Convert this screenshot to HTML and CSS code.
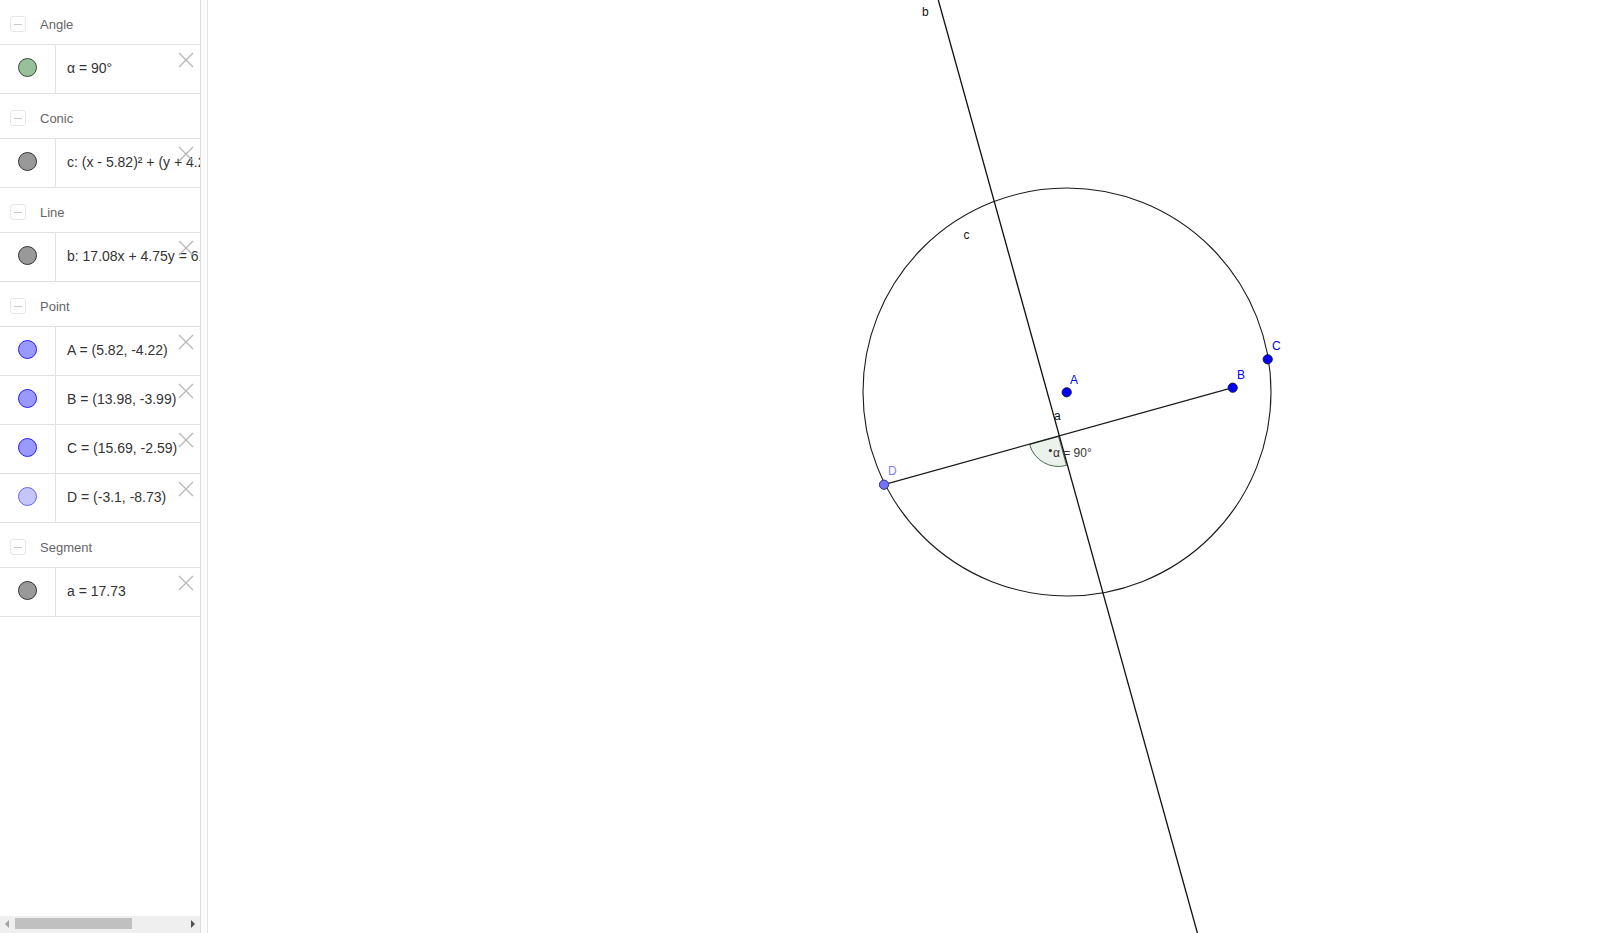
FILE: index.html
```html
<!DOCTYPE html>
<html>
<head>
<meta charset="utf-8">
<title>GeoGebra</title>
<link rel="stylesheet" href="styles.css">
</head>
<body>
<div class="app">
  <aside class="algebra">
    <div class="list">
      <div class="group-head"><span class="toggle"></span><span class="group-name">Angle</span></div>
      <div class="item">
        <div class="marker-cell"><span class="marker m-angle"></span></div>
        <div class="item-text">α = 90°</div>
        <span class="close"><svg viewBox="0 0 16 16"><path d="M1 1 L15 15 M15 1 L1 15"/></svg></span>
      </div>

      <div class="group-head"><span class="toggle"></span><span class="group-name">Conic</span></div>
      <div class="item">
        <div class="marker-cell"><span class="marker m-gray"></span></div>
        <div class="item-text">c: (x - 5.82)² + (y + 4.22)² = 100</div>
        <span class="close"><svg viewBox="0 0 16 16"><path d="M1 1 L15 15 M15 1 L1 15"/></svg></span>
      </div>

      <div class="group-head"><span class="toggle"></span><span class="group-name">Line</span></div>
      <div class="item">
        <div class="marker-cell"><span class="marker m-gray"></span></div>
        <div class="item-text">b: 17.08x + 4.75y = 61.59</div>
        <span class="close"><svg viewBox="0 0 16 16"><path d="M1 1 L15 15 M15 1 L1 15"/></svg></span>
      </div>

      <div class="group-head"><span class="toggle"></span><span class="group-name">Point</span></div>
      <div class="item">
        <div class="marker-cell"><span class="marker m-blue"></span></div>
        <div class="item-text">A = (5.82, -4.22)</div>
        <span class="close"><svg viewBox="0 0 16 16"><path d="M1 1 L15 15 M15 1 L1 15"/></svg></span>
      </div>
      <div class="item">
        <div class="marker-cell"><span class="marker m-blue"></span></div>
        <div class="item-text">B = (13.98, -3.99)</div>
        <span class="close"><svg viewBox="0 0 16 16"><path d="M1 1 L15 15 M15 1 L1 15"/></svg></span>
      </div>
      <div class="item">
        <div class="marker-cell"><span class="marker m-blue"></span></div>
        <div class="item-text">C = (15.69, -2.59)</div>
        <span class="close"><svg viewBox="0 0 16 16"><path d="M1 1 L15 15 M15 1 L1 15"/></svg></span>
      </div>
      <div class="item">
        <div class="marker-cell"><span class="marker m-light"></span></div>
        <div class="item-text">D = (-3.1, -8.73)</div>
        <span class="close"><svg viewBox="0 0 16 16"><path d="M1 1 L15 15 M15 1 L1 15"/></svg></span>
      </div>

      <div class="group-head"><span class="toggle"></span><span class="group-name">Segment</span></div>
      <div class="item">
        <div class="marker-cell"><span class="marker m-gray"></span></div>
        <div class="item-text">a = 17.73</div>
        <span class="close"><svg viewBox="0 0 16 16"><path d="M1 1 L15 15 M15 1 L1 15"/></svg></span>
      </div>
    </div>
    <div class="hscroll">
      <span class="arrow arrow-left"></span>
      <span class="thumb"></span>
      <span class="track-rest"></span>
      <span class="arrow arrow-right"></span>
    </div>
  </aside>
  <div class="divider"></div>
  <main class="canvas">
    <svg class="graphics" width="1392" height="933" viewBox="208 0 1392 933">
      <circle class="conic" cx="1067" cy="392" r="204"/>
      <path class="angle-fill" d="M1058.5 436.5 L1029.6 444.5 A30 30 0 0 0 1066.5 465.4 Z"/>
      <line class="line" x1="938.3" y1="0" x2="1197.4" y2="933"/>
      <line class="segment" x1="884" y1="484.7" x2="1232.7" y2="387.7"/>
      <circle class="angle-dot" cx="1050.4" cy="450.6" r="1.6"/>
      <text class="lbl lbl-angle" x="1053" y="457">α = 90°</text>
      <text class="lbl" x="922" y="16">b</text>
      <text class="lbl" x="963.5" y="239">c</text>
      <text class="lbl" x="1054" y="420">a</text>
      <circle class="pt" cx="1066.7" cy="392.3" r="4.6"/>
      <circle class="pt" cx="1232.7" cy="387.7" r="4.6"/>
      <circle class="pt" cx="1267.7" cy="359.3" r="4.6"/>
      <circle class="pt pt-light" cx="884" cy="484.7" r="4.6"/>
      <text class="lbl lbl-pt" x="1070" y="384">A</text>
      <text class="lbl lbl-pt" x="1237" y="378.5">B</text>
      <text class="lbl lbl-pt" x="1272" y="349.5">C</text>
      <text class="lbl lbl-ptl" x="888" y="475">D</text>
    </svg>
  </main>
</div>
</body>
</html>
```

FILE: styles.css
```css
html, body {
  margin: 0;
  padding: 0;
  background: #ffffff;
  overflow: hidden;
}

.app {
  display: flex;
  width: 1600px;
  height: 933px;
  font-family: "Liberation Sans", Arial, sans-serif;
}

.algebra {
  width: 200px;
  flex: 0 0 200px;
  display: flex;
  flex-direction: column;
  overflow: hidden;
  background: #ffffff;
}

.list {
  flex: 1;
  overflow: hidden;
}

.group-head {
  height: 40px;
  padding-top: 4px;
  border-bottom: 1px solid #e2e2e2;
  display: flex;
  align-items: center;
  padding-left: 10px;
}

.toggle {
  width: 14px;
  height: 14px;
  border: 1px solid #e6e6e6;
  border-radius: 3px;
  margin-right: 14px;
  display: flex;
  align-items: center;
  justify-content: center;
  box-sizing: content-box;
}

.toggle::before {
  content: "";
  width: 8px;
  height: 1px;
  background: #c8c8c8;
}

.group-name {
  font-size: 13px;
  color: #666666;
}

.item {
  position: relative;
  height: 48px;
  border-bottom: 1px solid #e2e2e2;
  display: flex;
}

.marker-cell {
  width: 56px;
  flex: 0 0 56px;
  border-right: 1px solid #e2e2e2;
  display: flex;
  align-items: center;
  justify-content: center;
  padding-bottom: 3px;
  box-sizing: border-box;
}

.marker {
  width: 17px;
  height: 17px;
  border-radius: 50%;
  border: 1px solid #333333;
}

.m-angle { background: #99c199; border-color: #3a4a3a; }
.m-gray { background: #999999; border-color: #333333; }
.m-blue { background: #9999ff; border-color: #2222ee; }
.m-light { background: #c6c6ff; border-color: #6666ee; }

.item-text {
  padding-left: 11px;
  display: flex;
  align-items: center;
  padding-bottom: 3px;
  font-size: 14px;
  color: #333333;
  white-space: nowrap;
}

.close {
  position: absolute;
  left: 178px;
  top: 7px;
  width: 16px;
  height: 16px;
}

.close svg {
  width: 16px;
  height: 16px;
  display: block;
}

.close path {
  stroke: #b8b8b8;
  stroke-width: 1.4;
  fill: none;
}

.hscroll {
  height: 17px;
  flex: 0 0 17px;
  background: #efefef;
  display: flex;
  align-items: flex-start;
}

.arrow {
  width: 15px;
  flex: 0 0 15px;
  height: 17px;
  position: relative;
}

.arrow::before {
  content: "";
  position: absolute;
  top: 4px;
  width: 0;
  height: 0;
  border-top: 4px solid transparent;
  border-bottom: 4px solid transparent;
}

.arrow-left::before {
  left: 5px;
  border-right: 4px solid #a0a0a0;
}

.arrow-right::before {
  left: 6px;
  border-left: 4px solid #505050;
}

.thumb {
  width: 117px;
  height: 11px;
  margin-top: 2px;
  background: #c0c0c0;
}

.track-rest {
  flex: 1;
}

.divider {
  width: 6px;
  flex: 0 0 6px;
  border-left: 1px solid #dedede;
  border-right: 1px solid #e4e4e4;
  background: #fbfbfb;
}

.canvas {
  flex: 1;
  overflow: hidden;
  background: #ffffff;
}

.graphics {
  display: block;
}

.conic {
  fill: none;
  stroke: #1a1a1a;
  stroke-width: 1.1;
}

.line {
  stroke: #111111;
  stroke-width: 1.3;
}

.segment {
  stroke: #1a1a1a;
  stroke-width: 1.2;
}

.angle-fill {
  fill: rgba(0, 80, 0, 0.08);
  stroke: #4d6b4d;
  stroke-width: 1;
}

.angle-dot {
  fill: #333333;
}

.lbl {
  font-family: "Liberation Sans", Arial, sans-serif;
  font-size: 12px;
  fill: #111111;
}

.lbl-angle {
  fill: #333333;
}

.lbl-pt {
  fill: #0000ff;
}

.lbl-ptl {
  fill: #8080ff;
}

.pt {
  fill: #0000ff;
  stroke: #1a1a3a;
  stroke-width: 1;
}

.pt-light {
  fill: #7373ff;
  stroke: #333377;
}
```
